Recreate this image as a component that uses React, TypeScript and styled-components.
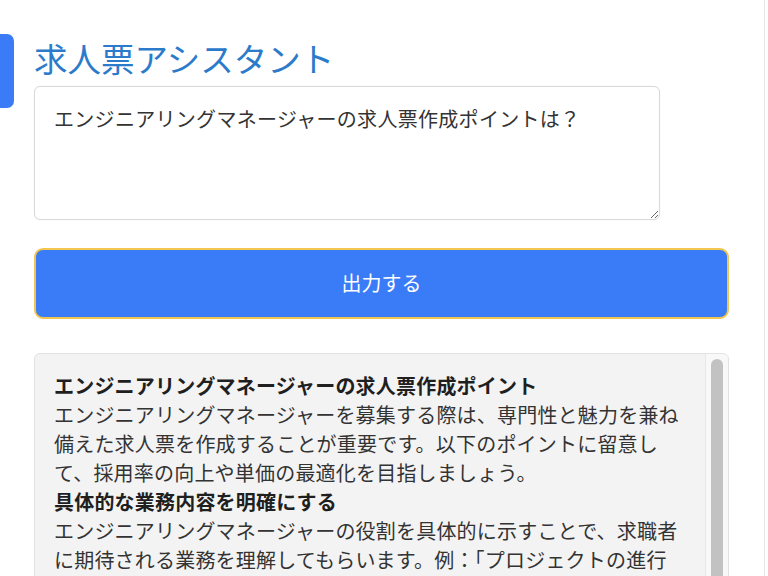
import React from "react";
import styled, { createGlobalStyle } from "styled-components";

const GlobalStyle = createGlobalStyle`
  html, body {
    margin: 0;
    padding: 0;
    background: #ffffff;
    overflow: hidden;
  }
  body {
    font-family: "Noto Sans CJK JP", "Noto Sans", sans-serif;
    color: #333333;
  }
  * { box-sizing: border-box; }
`;

const Page = styled.div`
  position: relative;
  width: 765px;
  height: 576px;
  overflow: hidden;
  border-right: 1px solid #e6e6e6;
  padding: 38px 35px 0 34px;
  display: flex;
  flex-direction: column;
`;

const SideTab = styled.div`
  position: absolute;
  left: 0;
  top: 34px;
  width: 14px;
  height: 74px;
  background: #3b7cf6;
  border-radius: 0 7px 7px 0;
`;

const Title = styled.h1`
  margin: 0;
  font-size: 33.5px;
  line-height: 40px;
  font-weight: 400;
  color: #2c7bcb;
`;

const Prompt = styled.textarea`
  margin-top: 8px;
  width: 626px;
  height: 134px;
  flex: none;
  border: 1px solid #d9d9d9;
  border-radius: 6px;
  padding: 17px 19px;
  font-family: "Noto Sans CJK JP", "Noto Sans", sans-serif;
  font-size: 20px;
  letter-spacing: 0.3px;
  line-height: 30px;
  color: #333333;
  background: #ffffff;
  resize: vertical;
  outline: none;
  box-shadow: 0 0 2px rgba(0, 0, 0, 0.06);
`;

const SubmitButton = styled.button`
  margin-top: 28px;
  width: 100%;
  height: 71px;
  flex: none;
  border: 2px solid #f2c54e;
  border-radius: 9px;
  background: #3a7bf7;
  color: #ffffff;
  font-family: "Noto Sans CJK JP", "Noto Sans", sans-serif;
  font-size: 20px;
  font-weight: 400;
  padding: 0 0 3px;
  cursor: pointer;
  display: flex;
  align-items: center;
  justify-content: center;
`;

const Output = styled.div`
  margin-top: 34px;
  width: 100%;
  height: 300px;
  flex: none;
  background: #f3f3f3;
  border: 1px solid #e2e2e2;
  border-radius: 6px;
  overflow: hidden;
  display: flex;
`;

const OutputBody = styled.div`
  flex: 1;
  min-width: 0;
  padding: 17px 21px 0 19px;
  overflow: hidden;
`;

const ScrollTrack = styled.div`
  width: 23px;
  flex: none;
  background: #f8f8f8;
  border-left: 1px solid #e6e6e6;
  padding: 5px 5px 0 5px;
  display: flex;
  justify-content: center;
`;

const ScrollThumb = styled.div`
  width: 12px;
  height: 260px;
  border-radius: 6px;
  background: #c2c2c2;
`;

const Heading = styled.div`
  font-size: 20px;
  letter-spacing: 0.2px;
  line-height: 29px;
  font-weight: 700;
  color: #1f1f1f;
`;

const Para = styled.div`
  font-size: 20px;
  letter-spacing: 0.2px;
  line-height: 29px;
  font-weight: 400;
  color: #333333;
`;

export default function App() {
  return (
    <>
      <GlobalStyle />
      <Page>
        <SideTab />
        <Title>求人票アシスタント</Title>
        <Prompt defaultValue="エンジニアリングマネージャーの求人票作成ポイントは？" />
        <SubmitButton>出力する</SubmitButton>
        <Output>
          <OutputBody>
            <Heading>エンジニアリングマネージャーの求人票作成ポイント</Heading>
            <Para>
              エンジニアリングマネージャーを募集する際は、専門性と魅力を兼ね備えた求人票を作成することが重要です。以下のポイントに留意して、採用率の向上や単価の最適化を目指しましょう。
            </Para>
            <Heading>具体的な業務内容を明確にする</Heading>
            <Para>
              エンジニアリングマネージャーの役割を具体的に示すことで、求職者に期待される業務を理解してもらいます。例：「プロジェクトの進行管理、チームメンバーの育成、技術的な意思決定のサポート」など。
            </Para>
          </OutputBody>
          <ScrollTrack>
            <ScrollThumb />
          </ScrollTrack>
        </Output>
      </Page>
    </>
  );
}
